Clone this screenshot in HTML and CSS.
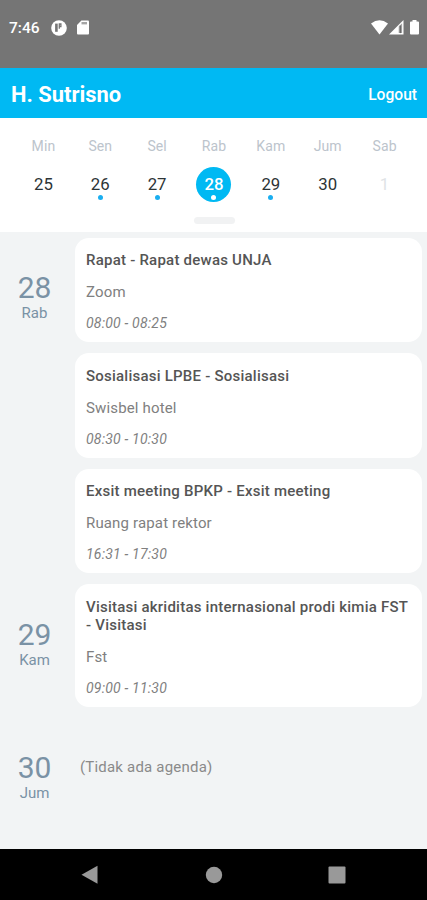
FILE: index.html
```html
<!DOCTYPE html>
<html lang="id">
<head>
  <meta charset="UTF-8">
  <meta name="viewport" content="width=device-width, initial-scale=1.0">
  <title>Agenda</title>
  <link rel="stylesheet" href="styles.css">
</head>
<body>
  <!-- Status bar -->
  <div class="status-bar">
    <div class="status-left">
      <span class="clock">7:46</span>
      <svg class="icon-app" width="16" height="16" viewBox="0 0 16 16">
        <circle cx="8" cy="8" r="7.8" fill="#fff"/>
        <path d="M5.4 3.6v8.2" fill="none" stroke="#757575" stroke-width="2.6"/>
        <path d="M8.3 3.2v5.6M8.3 4h1.6v2.6H8.3" fill="none" stroke="#757575" stroke-width="1.3"/>
      </svg>
      <svg class="icon-sd" width="12" height="15" viewBox="0 0 12 15">
        <path d="M4.4 .5H11q1 0 1 1v12q0 1-1 1H1q-1 0-1-1V5z" fill="#fff"/>
        <path d="M4.5 3.2h5.5" stroke="#a5a5a5" stroke-width="2.4"/>
      </svg>
    </div>
    <div class="status-right">
      <svg width="17" height="15" viewBox="0 0 17 15">
        <path d="M0 3.5Q8.5-3 17 3.5L8.5 14.5z" fill="#fff"/>
      </svg>
      <svg class="icon-signal" width="15" height="15" viewBox="0 0 15 15">
        <path d="M14.5 0v14.5H0z" fill="#fff"/>
        <path d="M9.7 6.6l3.4-3.4v9.9H9.7z" fill="#a5a5a5"/>
        <path d="M11.4 5.5v7.6" stroke="#686868" stroke-width="1.4"/>
      </svg>
      <svg class="icon-battery" width="9" height="15" viewBox="0 0 9 15">
        <path d="M2.5 0h4v1.5H8q1 0 1 1v11q0 1-1 1H1q-1 0-1-1v-11q0-1 1-1h1.5z" fill="#fff"/>
      </svg>
    </div>
  </div>

  <header>
    <h1>H. Sutrisno</h1>
    <a class="logout">Logout</a>
  </header>

  <!-- Week strip -->
  <section class="calendar">
    <div class="week">
      <div class="day"><span class="day-name">Min</span><span class="day-number">25</span></div>
      <div class="day marked"><span class="day-name">Sen</span><span class="day-number">26</span></div>
      <div class="day marked"><span class="day-name">Sel</span><span class="day-number">27</span></div>
      <div class="day marked selected"><span class="day-name">Rab</span><span class="day-number">28</span></div>
      <div class="day marked"><span class="day-name">Kam</span><span class="day-number">29</span></div>
      <div class="day"><span class="day-name">Jum</span><span class="day-number">30</span></div>
      <div class="day disabled"><span class="day-name">Sab</span><span class="day-number">1</span></div>
    </div>
    <div class="knob"></div>
  </section>

  <!-- Agenda list -->
  <main class="agenda">
    <section class="agenda-day">
      <div class="date"><span class="date-number">28</span><span class="date-name">Rab</span></div>
      <div class="events">
        <div class="card">
          <h3>Rapat - Rapat dewas UNJA</h3>
          <p>Zoom</p>
          <p class="time">08:00 - 08:25</p>
        </div>
        <div class="card">
          <h3>Sosialisasi LPBE - Sosialisasi</h3>
          <p>Swisbel hotel</p>
          <p class="time">08:30 - 10:30</p>
        </div>
        <div class="card">
          <h3>Exsit meeting BPKP - Exsit meeting</h3>
          <p>Ruang rapat rektor</p>
          <p class="time">16:31 - 17:30</p>
        </div>
      </div>
    </section>
    <section class="agenda-day">
      <div class="date"><span class="date-number">29</span><span class="date-name">Kam</span></div>
      <div class="events">
        <div class="card">
          <h3>Visitasi akriditas internasional prodi kimia FST - Visitasi</h3>
          <p>Fst</p>
          <p class="time">09:00 - 11:30</p>
        </div>
      </div>
    </section>
    <section class="agenda-day no-events">
      <div class="date"><span class="date-number">30</span><span class="date-name">Jum</span></div>
      <p class="empty">(Tidak ada agenda)</p>
    </section>
  </main>

  <!-- Navigation bar -->
  <nav>
    <svg width="18" height="20" viewBox="0 0 18 20"><path d="M16.5 .8v18L.5 9.8z" fill="#999"/></svg>
    <svg width="18" height="18" viewBox="0 0 18 18"><circle cx="9" cy="9" r="8.2" fill="#999"/></svg>
    <svg width="18" height="18" viewBox="0 0 18 18"><rect x=".5" y=".5" width="17" height="17" rx="1" fill="#999"/></svg>
  </nav>
</body>
</html>
```

FILE: styles.css
```css
* {
  box-sizing: border-box;
}

body {
  margin: 0;
  height: 900px;
  display: flex;
  flex-direction: column;
  overflow: hidden;
  font-family: Roboto, sans-serif;
  background: #f2f4f5;
}

h1, h3, p {
  margin: 0;
}

.status-bar {
  height: 68px;
  padding: 0 8px 13px 9px;
  display: flex;
  justify-content: space-between;
  align-items: center;
  background: #757575;
  color: white;
}

.status-left,
.status-right {
  display: flex;
  align-items: center;
}

.clock {
  width: 42px;
  padding-top: 1px;
  font-size: 15.5px;
  font-weight: 500;
}

.icon-sd {
  margin-left: 10px;
}

.icon-signal {
  margin-left: 1px;
}

.icon-battery {
  margin-left: 6px;
}

header {
  height: 50px;
  padding: 3px 10px 0 11px;
  display: flex;
  justify-content: space-between;
  align-items: center;
  background: #00b9f3;
  color: white;
}

header h1 {
  font-size: 21.9px;
  font-weight: 700;
}

.logout {
  font-size: 15.6px;
  font-weight: 500;
}

.calendar {
  height: 114px;
  padding: 18px 14px 0 15px;
  background: white;
}

.week {
  display: grid;
  grid-template-columns: repeat(7, 1fr);
}

.day {
  display: flex;
  flex-direction: column;
  align-items: center;
}

.day-name {
  height: 31px;
  font-size: 14px;
  line-height: 20px;
  letter-spacing: 0.1px;
  color: #bcc4cc;
}

.day-number {
  position: relative;
  width: 35px;
  height: 35px;
  border-radius: 50%;
  font-size: 16.8px;
  line-height: 35px;
  text-align: center;
  color: #2d3436;
}

.marked .day-number::after {
  content: "";
  position: absolute;
  left: 15px;
  bottom: 2px;
  width: 5px;
  height: 5px;
  border-radius: 50%;
  background: #1aaef0;
}

.selected .day-number {
  background: #00b9f3;
  color: white;
  font-weight: 500;
}

.selected .day-number::after {
  background: white;
}

.disabled .day-number {
  color: #e0e3e6;
}

.knob {
  width: 41px;
  height: 7px;
  margin: 15px auto 0;
  border-radius: 4px;
  background: #f1f2f3;
}

.agenda {
  flex: 1;
  padding-top: 5.5px;
}

.agenda-day {
  display: flex;
}

.date {
  width: 69px;
  margin-right: 6px;
  padding-top: 33.5px;
  display: flex;
  flex-direction: column;
  align-items: center;
  color: #7a92a5;
}

.date-number {
  font-size: 30px;
  line-height: 34px;
}

.date-name {
  font-size: 15px;
  line-height: 16px;
}

.events {
  flex: 1;
  padding-right: 5px;
}

.card {
  margin-bottom: 11px;
  padding: 13.5px 8px 10px 11px;
  border-radius: 14px;
  background: white;
}

.card h3 {
  font-size: 15px;
  font-weight: 500;
  line-height: 18px;
  letter-spacing: 0.23px;
  color: #555;
}

.card p {
  margin-top: 14px;
  font-size: 15px;
  line-height: 18px;
  letter-spacing: 0.15px;
  color: #808080;
}

.card .time {
  margin-top: 13px;
  font-size: 14px;
  font-style: italic;
  letter-spacing: 0.2px;
}

.empty {
  padding: 40.5px 0 0 5px;
  font-size: 15px;
  line-height: 18px;
  letter-spacing: 0.2px;
  color: #8a8a8a;
}

nav {
  height: 51px;
  padding: 0 81px;
  display: flex;
  justify-content: space-between;
  align-items: center;
  background: black;
}
```
